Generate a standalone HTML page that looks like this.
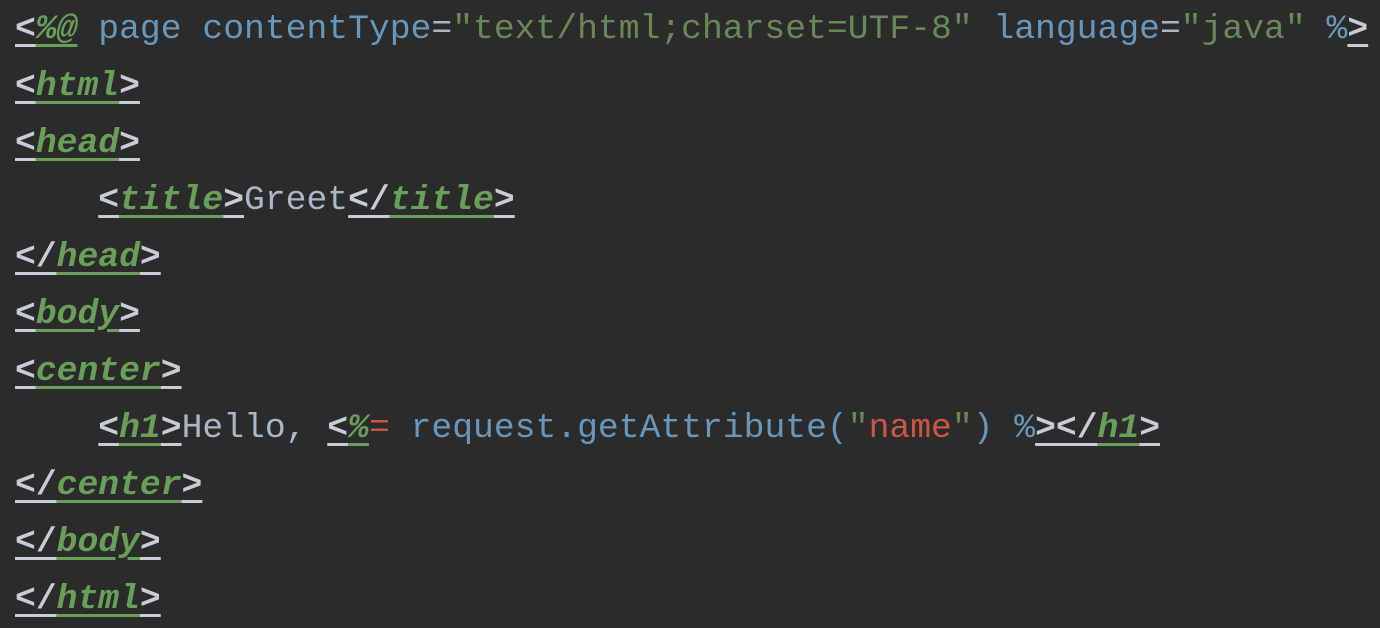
<!DOCTYPE html>
<html><head><meta charset="utf-8"><style>
body{margin:0;background:#2b2b2b;width:1380px;height:627px;overflow:hidden}
pre{margin:0;padding:1px 0 0 15px;font-family:"Liberation Mono",monospace;font-size:34.7px;line-height:57px;color:#a9b7c6;letter-spacing:0}
.b{color:#c8ccd4;font-weight:bold;text-decoration:underline;text-decoration-thickness:3px;text-underline-offset:6px}
.t{color:#6a9f5a;font-weight:bold;font-style:italic;text-decoration:underline;text-decoration-thickness:3px;text-underline-offset:6px}
.k{color:#6897bb}
.s{color:#6a8759}
.r{color:#cc5546}
</style></head><body><pre><span class="b">&lt;</span><span class="t">%@</span> <span class="k">page contentType</span>=<span class="s">"text/html;charset=UTF-8"</span> <span class="k">language</span>=<span class="s">"java"</span> <span class="k">%</span><span class="b">&gt;</span>
<span class="b">&lt;</span><span class="t">html</span><span class="b">&gt;</span>
<span class="b">&lt;</span><span class="t">head</span><span class="b">&gt;</span>
    <span class="b">&lt;</span><span class="t">title</span><span class="b">&gt;</span>Greet<span class="b">&lt;/</span><span class="t">title</span><span class="b">&gt;</span>
<span class="b">&lt;/</span><span class="t">head</span><span class="b">&gt;</span>
<span class="b">&lt;</span><span class="t">body</span><span class="b">&gt;</span>
<span class="b">&lt;</span><span class="t">center</span><span class="b">&gt;</span>
    <span class="b">&lt;</span><span class="t">h1</span><span class="b">&gt;</span>Hello, <span class="b">&lt;</span><span class="t">%</span><span class="r">=</span> <span class="k">request.getAttribute(</span><span class="s">"</span><span class="r">name</span><span class="s">"</span><span class="k">) %</span><span class="b">&gt;&lt;/</span><span class="t">h1</span><span class="b">&gt;</span>
<span class="b">&lt;/</span><span class="t">center</span><span class="b">&gt;</span>
<span class="b">&lt;/</span><span class="t">body</span><span class="b">&gt;</span>
<span class="b">&lt;/</span><span class="t">html</span><span class="b">&gt;</span></pre></body></html>
